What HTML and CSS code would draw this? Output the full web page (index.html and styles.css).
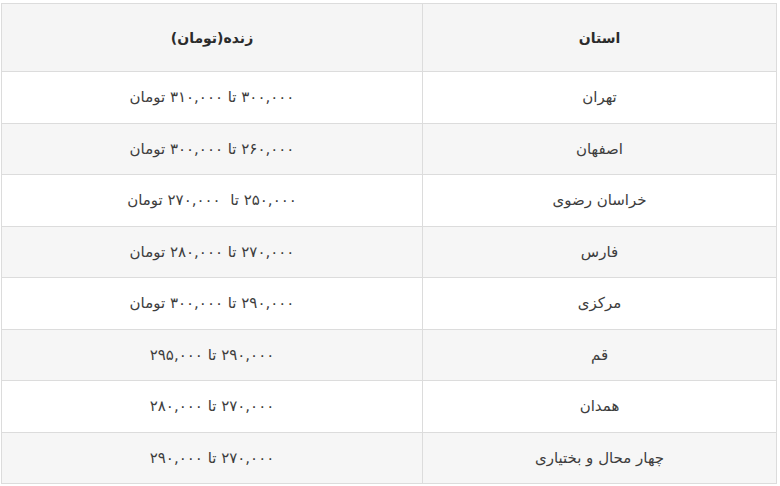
FILE: index.html
```html
<!DOCTYPE html>
<html lang="fa" dir="rtl">
<head>
<meta charset="utf-8">
<link rel="stylesheet" href="styles.css">
</head>
<body>
<table class="prices">
  <thead>
    <tr><th class="c-prov">استان</th><th class="c-price">زنده(تومان)</th></tr>
  </thead>
  <tbody>
    <tr><td>تهران</td><td>۳۰۰,۰۰۰ تا ۳۱۰,۰۰۰ تومان</td></tr>
    <tr><td>اصفهان</td><td>۲۶۰,۰۰۰ تا ۳۰۰,۰۰۰ تومان</td></tr>
    <tr><td>خراسان رضوی</td><td>۲۵۰,۰۰۰ تا&nbsp; ۲۷۰,۰۰۰ تومان</td></tr>
    <tr><td>فارس</td><td>۲۷۰,۰۰۰ تا ۲۸۰,۰۰۰ تومان</td></tr>
    <tr><td>مرکزی</td><td>۲۹۰,۰۰۰ تا ۳۰۰,۰۰۰ تومان</td></tr>
    <tr><td>قم</td><td>۲۹۰,۰۰۰ تا ۲۹۵,۰۰۰</td></tr>
    <tr><td>همدان</td><td>۲۷۰,۰۰۰ تا ۲۸۰,۰۰۰</td></tr>
    <tr><td>چهار محال و بختیاری</td><td>۲۷۰,۰۰۰ تا ۲۹۰,۰۰۰</td></tr>
  </tbody>
</table>
</body>
</html>
```

FILE: styles.css
```css
html, body {
  margin: 0;
  padding: 0;
  background: #ffffff;
}
body {
  padding: 3px 3px 0 3px;
  font-family: "DejaVu Sans", "Noto Sans", sans-serif;
  color: #3d3d3d;
}
.prices {
  width: 774px;
  border-collapse: collapse;
  table-layout: fixed;
  font-size: 15px;
}
.prices th, .prices td {
  border: 1px solid #dcdcdc;
  text-align: center;
  vertical-align: middle;
  padding: 0;
}
.prices th {
  height: 67px;
  background: #f5f5f5;
  font-size: 14px;
  font-weight: bold;
  color: #2b2b2b;
}
.prices td {
  height: 50.5px;
}
.prices tbody tr:nth-child(even) td {
  background: #f6f6f6;
}
.c-prov { width: 353px; }
.c-price { width: 420px; }
```
